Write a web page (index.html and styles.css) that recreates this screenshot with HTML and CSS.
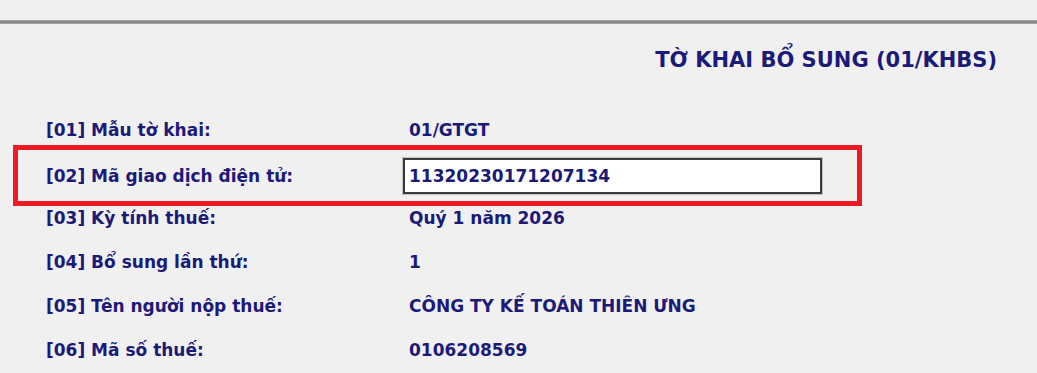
FILE: index.html
```html
<!DOCTYPE html>
<html lang="vi">
<head>
<meta charset="utf-8">
<title>Tờ khai bổ sung</title>
<link rel="stylesheet" href="styles.css">
</head>
<body>
<div class="page">
  <div class="rule"></div>
  <h1 class="title">TỜ KHAI BỔ SUNG (01/KHBS)</h1>
  <div class="form">
    <div class="row"><span class="label">[01] Mẫu tờ khai:</span><span class="value">01/GTGT</span></div>
    <div class="row highlight"><span class="label">[02] Mã giao dịch điện tử:</span><span class="value"><span class="input">11320230171207134</span></span></div>
    <div class="row"><span class="label">[03] Kỳ tính thuế:</span><span class="value">Quý 1 năm 2026</span></div>
    <div class="row"><span class="label">[04] Bổ sung lần thứ:</span><span class="value">1</span></div>
    <div class="row"><span class="label">[05] Tên người nộp thuế:</span><span class="value">CÔNG TY KẾ TOÁN THIÊN ƯNG</span></div>
    <div class="row"><span class="label">[06] Mã số thuế:</span><span class="value">0106208569</span></div>
  </div>
</div>
</body>
</html>
```

FILE: styles.css
```css
html, body {
  margin: 0;
  padding: 0;
  background: #f0f0f0;
}
.page {
  width: 1037px;
  height: 373px;
  overflow: hidden;
  background: #f0f0f0;
  font-family: "DejaVu Sans", "Liberation Sans", sans-serif;
  font-weight: bold;
  color: #1c1a78;
}
.rule {
  margin-top: 20px;
  height: 4px;
  background: linear-gradient(#a8a8a8, #7e7e7e 50%, #8c8c8c 75%, #b8b8b8);
}
.title {
  margin: 24px 0 0;
  padding-right: 40px;
  height: 24px;
  line-height: 24px;
  text-align: right;
  font-size: 21px;
  font-weight: bold;
}
.form {
  margin-top: 36px;
  display: flex;
  flex-direction: column;
}
.row {
  display: grid;
  grid-template-columns: 363px 1fr;
  align-items: center;
  height: 44px;
  padding-left: 46px;
  font-size: 17px;
  box-sizing: border-box;
}
.row.highlight {
  height: 61px;
  margin: -7px 175px -10px 13px;
  padding-left: 28px;
  border: 5px solid #ed1c24;
}
.input {
  display: flex;
  align-items: center;
  box-sizing: border-box;
  width: 419px;
  height: 36px;
  margin-left: -6px;
  padding-left: 4px;
  background: #ffffff;
  border: 2px solid #3a3a3a;
  box-shadow: 0 0 0 1px #c4c4c4;
}
```
